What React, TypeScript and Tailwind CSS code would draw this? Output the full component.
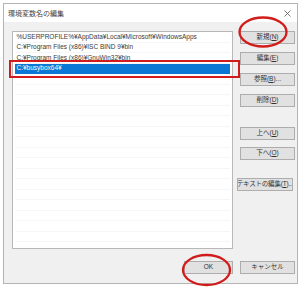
const FONT = "font-['Liberation_Sans','Noto_Sans_CJK_JP',sans-serif]";

const ITEMS = [
  '%USERPROFILE%¥AppData¥Local¥Microsoft¥WindowsApps',
  'C:¥Program Files (x86)¥ISC BIND 9¥bin',
  'C:¥Program Files (x86)¥GnuWin32¥bin',
  'C:¥busybox64¥',
];

function Btn({ label, className = '' }: { label: React.ReactNode; className?: string }) {
  return (
    <div
      className={`h-[13px] flex items-center justify-center border border-[#adadad] bg-[#e1e1e1] text-[6.5px] text-[#333] leading-none whitespace-nowrap overflow-hidden ${className}`}
    >
      {label}
    </div>
  );
}

export default function App() {
  return (
    <div className={`relative w-[300px] h-[287px] bg-white overflow-hidden ${FONT}`}>
      <div className="ml-[3px] mt-[3px] w-[295px] h-[281px] border border-[#b4b4b4] bg-[#f0f0f0] flex flex-col">
        {/* title bar */}
        <div className="h-[18px] bg-white flex items-center justify-between pl-[4px] pr-[6px]">
          <span className="text-[7px] text-[#444] leading-none">環境変数名の編集</span>
          <svg width="7" height="7" viewBox="0 0 7 7">
            <path d="M0.5 0.5 L6.5 6.5 M6.5 0.5 L0.5 6.5" stroke="#555" strokeWidth="0.8" />
          </svg>
        </div>

        <div className="flex pl-[8px] pr-[2px] pt-[9px] gap-[7px]">
          {/* list */}
          <div className="w-[221px] h-[218px] bg-white border border-[#b8b8b8] px-[2px] flex flex-col">
            {ITEMS.map((t, i) => (
              <div
                key={t}
                className={`h-[10.5px] shrink-0 flex items-center pl-[1.5px] text-[6.5px] leading-none whitespace-nowrap border-b ${
                  i === 3 ? 'bg-[#0a78d4] text-white border-[#0a78d4]' : 'text-[#3a3a3a] border-[#f6f6f6]'
                }`}
              >
                {t}
              </div>
            ))}
            {Array.from({ length: 16 }).map((_, i) => (
              <div key={i} className="h-[10.5px] shrink-0 border-b border-[#f6f6f6]" />
            ))}
          </div>

          {/* buttons */}
          <div className="w-[55px] flex flex-col">
            <Btn label={<>新規(<u>N</u>)</>} />
            <Btn label={<>編集(<u>E</u>)</>} className="mt-[8px]" />
            <Btn label={<>参照(<u>B</u>)...</>} className="mt-[8px]" />
            <Btn label={<>削除(<u>D</u>)</>} className="mt-[8px]" />
            <Btn label={<>上へ(<u>U</u>)</>} className="mt-[20px]" />
            <Btn label={<>下へ(<u>O</u>)</>} className="mt-[7px]" />
            <Btn
              label={<>テキストの編集(<u>T</u>)...</>}
              className="mt-[18px] ml-[-3px] w-[56px] text-[5.6px] tracking-[-0.2px]"
            />
          </div>
        </div>

        {/* bottom buttons */}
        <div className="flex justify-end gap-[7px] pr-[2px] mt-[12px]">
          <Btn label="OK" className="w-[49px] border-[#0078d7]" />
          <Btn label="キャンセル" className="w-[55px]" />
        </div>
      </div>

      {/* annotations */}
      <div className="absolute left-[9px] top-[60px] w-[231px] h-[18px] border-[2.5px] border-[#d21c1c]" />
      <svg className="absolute inset-0 pointer-events-none" width="300" height="287" viewBox="0 0 300 287">
        <ellipse cx="263" cy="32" rx="23.5" ry="14.5" fill="none" stroke="#d21c1c" strokeWidth="2.3" />
        <ellipse cx="206.5" cy="270" rx="23.5" ry="15" fill="none" stroke="#d21c1c" strokeWidth="2.3" />
      </svg>
    </div>
  );
}
